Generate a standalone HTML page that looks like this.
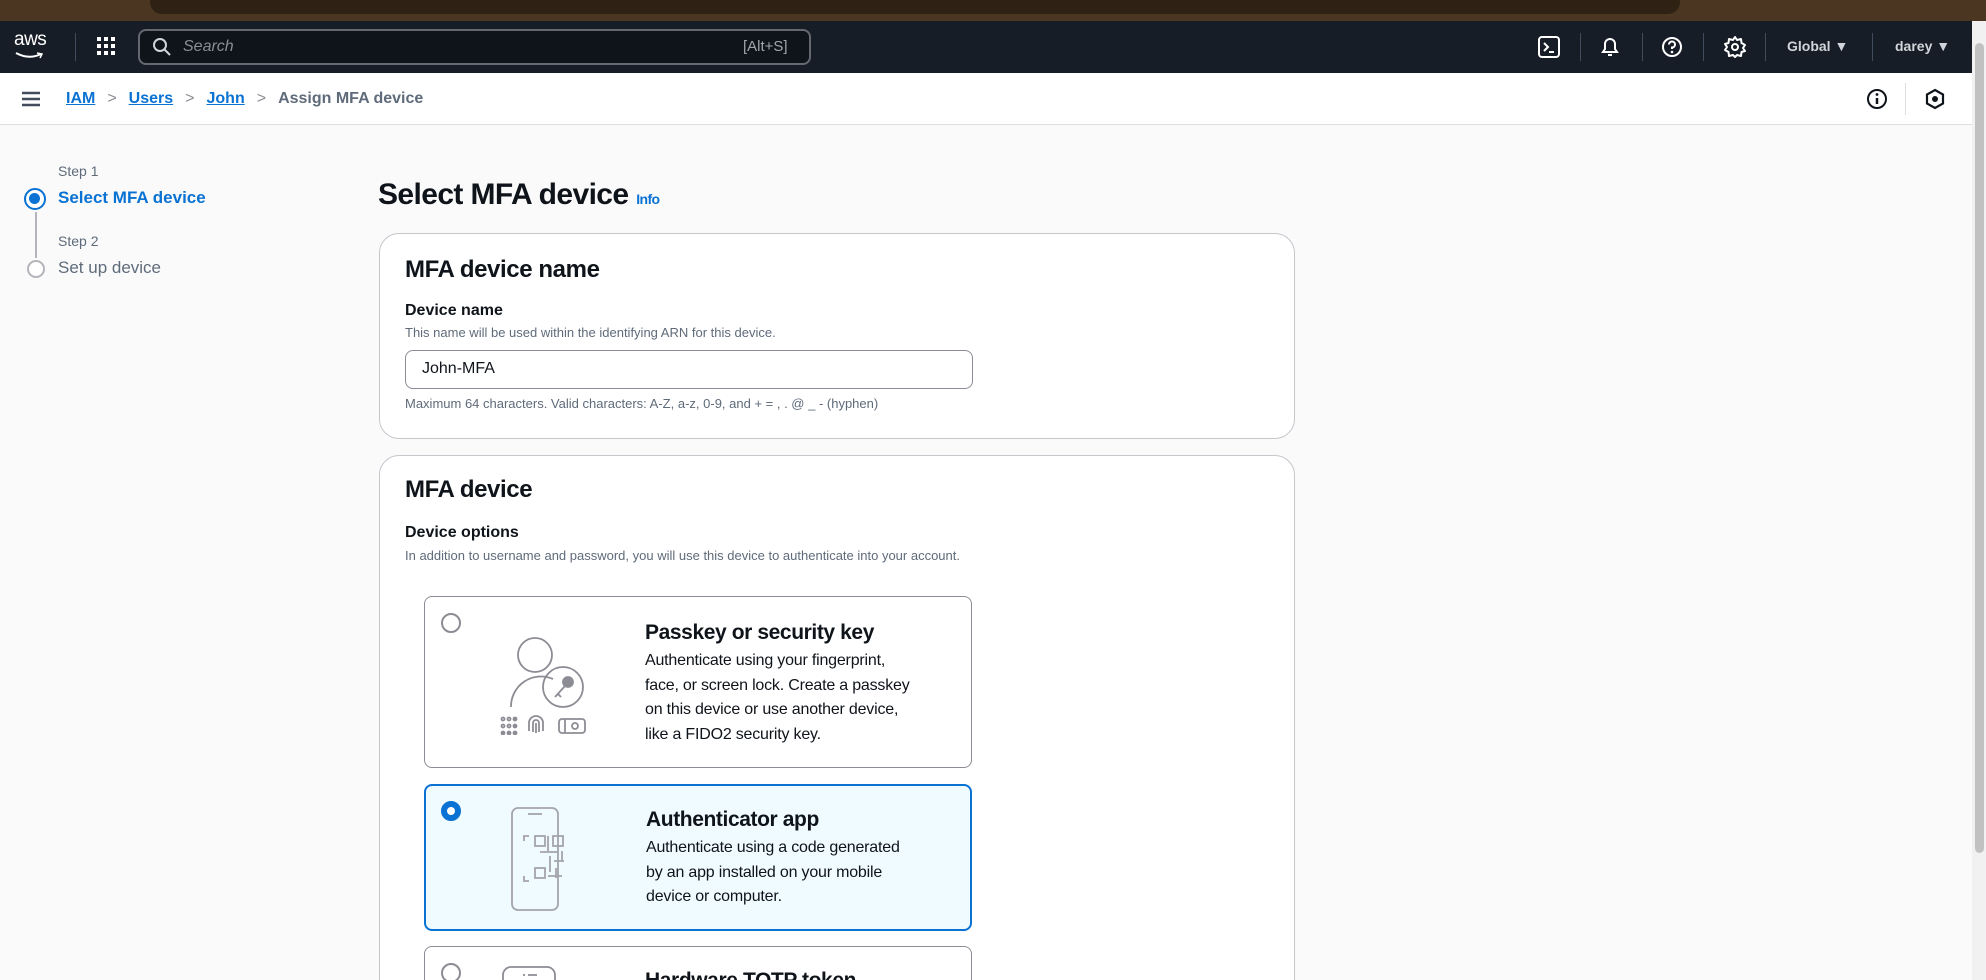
<!DOCTYPE html>
<html style="height:980px;overflow:hidden"><head><meta charset="utf-8"><style>
*{box-sizing:border-box;margin:0;padding:0}
body{width:1986px;height:980px;overflow:hidden;background:#fafafa;font-family:"Liberation Sans",sans-serif;color:#0f141a;position:relative}
.abs{position:absolute}
.top{left:0;top:0;width:1986px;height:21px;background:#4b3621}
.top .pill{position:absolute;left:150px;top:-10px;width:1530px;height:24px;background:#2f2214;border-radius:12px}
.nav{left:0;top:21px;width:1972px;height:52px;background:#161d26}
.crumb{left:0;top:73px;width:1972px;height:52px;background:#fff;border-bottom:1px solid #dedee3}
.scroll{left:1972px;top:21px;width:14px;height:959px;background:#f1f1f1}
.scroll div{position:absolute;left:3px;top:22px;width:9px;height:810px;background:#c1c1c1;border-radius:5px}
.sep{position:absolute;width:1px;height:28px;background:#414d5c;top:33px}
.navt{color:#d1d5db;font-size:14px;font-weight:bold}
a{color:#0972d3;text-decoration:underline}
.card{background:#fff;border:1px solid #c6c6cd;border-radius:20px}
.opt{position:absolute;left:424px;width:548px;border:1px solid #8c8c94;border-radius:8px;background:#fff}
.opt h4{position:absolute;left:220px;font-size:21px;font-weight:bold;letter-spacing:-0.4px}
.opt p{position:absolute;left:220px;font-size:16px;line-height:24.5px;color:#0f141a;width:300px;letter-spacing:-0.2px}
.radio{position:absolute;left:16px;top:16px;width:20px;height:20px;border:2px solid #8c8c94;border-radius:50%;background:#fff}
</style></head><body>
<div class="abs top"><div class="pill"></div></div>
<div class="abs nav">
 <div class="abs" style="left:14px;top:8px;color:#fff;font-size:19px;letter-spacing:-0.5px">aws</div>
 <svg class="abs" style="left:14px;top:30px" width="30" height="10"><path d="M2 2 Q15 9 27 3" stroke="#fff" stroke-width="2" fill="none"/><path d="M23 2 L28 3 L26 7" stroke="#fff" stroke-width="1.5" fill="none"/></svg>
 <div class="sep" style="left:75px;top:12px"></div>
 <svg class="abs" style="left:97px;top:16px" width="18" height="18" fill="#fff"><rect x="0" y="0" width="4" height="4"/><rect x="7" y="0" width="4" height="4"/><rect x="14" y="0" width="4" height="4"/><rect x="0" y="7" width="4" height="4"/><rect x="7" y="7" width="4" height="4"/><rect x="14" y="7" width="4" height="4"/><rect x="0" y="14" width="4" height="4"/><rect x="7" y="14" width="4" height="4"/><rect x="14" y="14" width="4" height="4"/></svg>
 <div class="abs" style="left:138px;top:8px;width:673px;height:36px;border:2px solid #656871;border-radius:8px;background:#0f141a"></div>
 <svg class="abs" style="left:152px;top:16px" width="20" height="20"><circle cx="8" cy="8" r="6" stroke="#d1d5db" stroke-width="2" fill="none"/><path d="M12.5 12.5 L18 18" stroke="#d1d5db" stroke-width="2"/></svg>
 <div class="abs" style="left:183px;top:17px;color:#8c8c94;font-size:16px;font-style:italic">Search</div>
 <div class="abs" style="left:743px;top:17px;color:#a4a4ad;font-size:15px">[Alt+S]</div>
 <svg class="abs" style="left:1538px;top:15px" width="22" height="22"><rect x="1" y="1" width="20" height="20" rx="3" stroke="#fff" stroke-width="2" fill="none"/><path d="M6 7 L10 11 L6 15 M11 16 H16" stroke="#fff" stroke-width="2" fill="none"/></svg>
 <div class="sep" style="left:1580px;top:12px"></div>
 <svg class="abs" style="left:1599px;top:14px" width="22" height="24"><path d="M4 17 H18 L16 14 V9 A5 5 0 0 0 6 9 V14 Z" stroke="#fff" stroke-width="2" fill="none"/><path d="M9 20 H13" stroke="#fff" stroke-width="2"/></svg>
 <div class="sep" style="left:1642px;top:12px"></div>
 <svg class="abs" style="left:1661px;top:15px" width="22" height="22"><circle cx="11" cy="11" r="9" stroke="#fff" stroke-width="2" fill="none"/><path d="M8 8.5 A3 3 0 1 1 11 11.5 V13" stroke="#fff" stroke-width="2" fill="none"/><circle cx="11" cy="16" r="1.3" fill="#fff"/></svg>
 <div class="sep" style="left:1703px;top:12px"></div>
 <svg class="abs" style="left:1723px;top:14px" width="24" height="24"><circle cx="12" cy="12" r="3" stroke="#fff" stroke-width="2" fill="none"/><path d="M12 2 L14 5 L18 4 L18.5 8 L22 10 L20 13 L22 16 L18.5 17 L18 21 L14 20 L12 22 L10 20 L6 21 L5.5 17 L2 15 L4 12 L2 9 L5.5 8 L6 4 L10 5 Z" stroke="#fff" stroke-width="2" fill="none" stroke-linejoin="round"/></svg>
 <div class="sep" style="left:1765px;top:12px"></div>
 <div class="abs navt" style="left:1787px;top:17px">Global ▼</div>
 <div class="sep" style="left:1872px;top:12px"></div>
 <div class="abs navt" style="left:1895px;top:17px">darey ▼</div>
</div>
<div class="abs crumb">
 <svg class="abs" style="left:22px;top:18px" width="18" height="16"><path d="M0 2H18M0 8H18M0 14H18" stroke="#414d5c" stroke-width="2.5"/></svg>
 <div class="abs" style="left:66px;top:17px;font-size:16px;font-weight:bold"><a>IAM</a><span style="color:#8c8c94;margin:0 12px;font-weight:normal">&gt;</span><a>Users</a><span style="color:#8c8c94;margin:0 12px;font-weight:normal">&gt;</span><a>John</a><span style="color:#8c8c94;margin:0 12px;font-weight:normal">&gt;</span><span style="color:#5f6b7a">Assign MFA device</span></div>
 <svg class="abs" style="left:1866px;top:15px" width="22" height="22"><circle cx="11" cy="11" r="9" stroke="#0f141a" stroke-width="2" fill="none"/><path d="M11 10V16" stroke="#0f141a" stroke-width="2.5"/><circle cx="11" cy="6.5" r="1.4" fill="#0f141a"/></svg>
 <div class="abs" style="left:1905px;top:10px;width:1px;height:32px;background:#dedee3"></div>
 <svg class="abs" style="left:1924px;top:15px" width="22" height="22"><path d="M11 2 L19 6.5 V15.5 L11 20 L3 15.5 V6.5 Z" stroke="#0f141a" stroke-width="2.2" fill="none"/><circle cx="11" cy="11" r="3" fill="#0f141a"/></svg>
</div>
<div class="abs scroll"><div></div></div>

<div class="abs" style="left:58px;top:163px;font-size:14px;color:#5f6b7a">Step 1</div>
<div class="abs" style="left:24px;top:188px;width:22px;height:22px;border:2.5px solid #0972d3;border-radius:50%;background:#fff"><div style="margin:3px;width:11px;height:11px;border-radius:50%;background:#0972d3"></div></div>
<div class="abs" style="left:58px;top:188px;font-size:17px;font-weight:bold;color:#0972d3">Select MFA device</div>
<div class="abs" style="left:35px;top:212px;width:2px;height:46px;background:#b4b4bb"></div>
<div class="abs" style="left:58px;top:233px;font-size:14px;color:#5f6b7a">Step 2</div>
<div class="abs" style="left:27px;top:260px;width:18px;height:18px;border:2px solid #b4b4bb;border-radius:50%;background:#fff"></div>
<div class="abs" style="left:58px;top:258px;font-size:17px;color:#5f6b7a">Set up device</div>

<div class="abs" style="left:378px;top:178px;font-size:30px;font-weight:bold;letter-spacing:-0.6px">Select MFA device <span style="font-size:14px;color:#0972d3">Info</span></div>

<div class="abs card" style="left:379px;top:233px;width:916px;height:206px">
 <div class="abs" style="left:25px;top:22px;font-size:24px;font-weight:bold;letter-spacing:-0.4px">MFA device name</div>
 <div class="abs" style="left:25px;top:68px;font-size:16px;font-weight:bold">Device name</div>
 <div class="abs" style="left:25px;top:91px;font-size:13px;color:#5f6b7a">This name will be used within the identifying ARN for this device.</div>
 <div class="abs" style="left:25px;top:116px;width:568px;height:39px;border:1.5px solid #8c8c94;border-radius:8px;padding:9px 16px;font-size:16px">John-MFA</div>
 <div class="abs" style="left:25px;top:162px;font-size:13px;color:#5f6b7a">Maximum 64 characters. Valid characters: A-Z, a-z, 0-9, and + = , . @ _ - (hyphen)</div>
</div>

<div class="abs card" style="left:379px;top:455px;width:916px;height:560px">
 <div class="abs" style="left:25px;top:20px;font-size:24px;font-weight:bold;letter-spacing:-0.4px">MFA device</div>
 <div class="abs" style="left:25px;top:68px;font-size:16px;font-weight:bold">Device options</div>
 <div class="abs" style="left:25px;top:92px;font-size:13px;color:#5f6b7a">In addition to username and password, you will use this device to authenticate into your account.</div>
</div>

<div class="opt" style="top:596px;height:172px">
 <div class="radio"></div>
 <svg class="abs" style="left:68px;top:38px" width="120" height="100" fill="none" stroke="#8c8c94" stroke-width="1.8"><circle cx="42" cy="20" r="17"/><path d="M18 72 A30 30 0 0 1 60 44"/><circle cx="70" cy="52" r="20"/><circle cx="75" cy="47" r="5" fill="#8c8c94"/><path d="M72 51 L62 62 M65 59 L68 62"/><circle cx="10" cy="84" r="1.5"/><circle cx="16" cy="84" r="1.5"/><circle cx="22" cy="84" r="1.5" fill="#8c8c94"/><circle cx="10" cy="91" r="1.5"/><circle cx="16" cy="91" r="1.5"/><circle cx="22" cy="91" r="1.5" fill="#8c8c94"/><circle cx="10" cy="98" r="1.5" fill="#8c8c94"/><circle cx="16" cy="98" r="1.5" fill="#8c8c94"/><circle cx="22" cy="98" r="1.5" fill="#8c8c94"/><path d="M36 96 V88 A7 7 0 0 1 50 88 V96 M40 97 V88 A3 3 0 0 1 46 88 V97 M43 88 V98"/><rect x="66" y="84" width="26" height="14" rx="3"/><path d="M72 84 V98"/><circle cx="82" cy="91" r="3"/></svg>
 <h4 style="top:24px">Passkey or security key</h4>
 <p style="top:52px">Authenticate using your fingerprint,<br>face, or screen lock. Create a passkey<br>on this device or use another device,<br>like a FIDO2 security key.</p>
</div>

<div class="opt" style="top:784px;height:147px;border:2px solid #0972d3;background:#f0fbff">
 <div class="radio" style="border:6px solid #0972d3;left:15px;top:15px"></div>
 <svg class="abs" style="left:84px;top:20px" width="70" height="110" fill="none" stroke="#a4a4ad" stroke-width="1.8"><rect x="2" y="2" width="46" height="102" rx="6"/><path d="M18 8 H32"/><path d="M14 35 V30 H19 M14 70 V75 H19"/><rect x="25" y="30" width="10" height="10"/><rect x="43" y="30" width="10" height="10"/><rect x="25" y="62" width="10" height="10"/><path d="M38 30 V45 M30 46 H48 M40 50 V66 M44 55 H54 M46 62 V72 M38 70 H52 M52 45 V55"/></svg>
 <h4 style="top:22px">Authenticator app</h4>
 <p style="top:50px">Authenticate using a code generated<br>by an app installed on your mobile<br>device or computer.</p>
</div>

<div class="opt" style="top:946px;height:50px">
 <div class="radio"></div>
 <svg class="abs" style="left:76px;top:18px" width="60" height="30" fill="none" stroke="#8c8c94" stroke-width="1.8"><rect x="2" y="2" width="52" height="30" rx="8"/><path d="M22 10 H24 M27 10 H36"/></svg>
 <h4 style="top:22px">Hardware TOTP token</h4>
</div>
</body></html>
